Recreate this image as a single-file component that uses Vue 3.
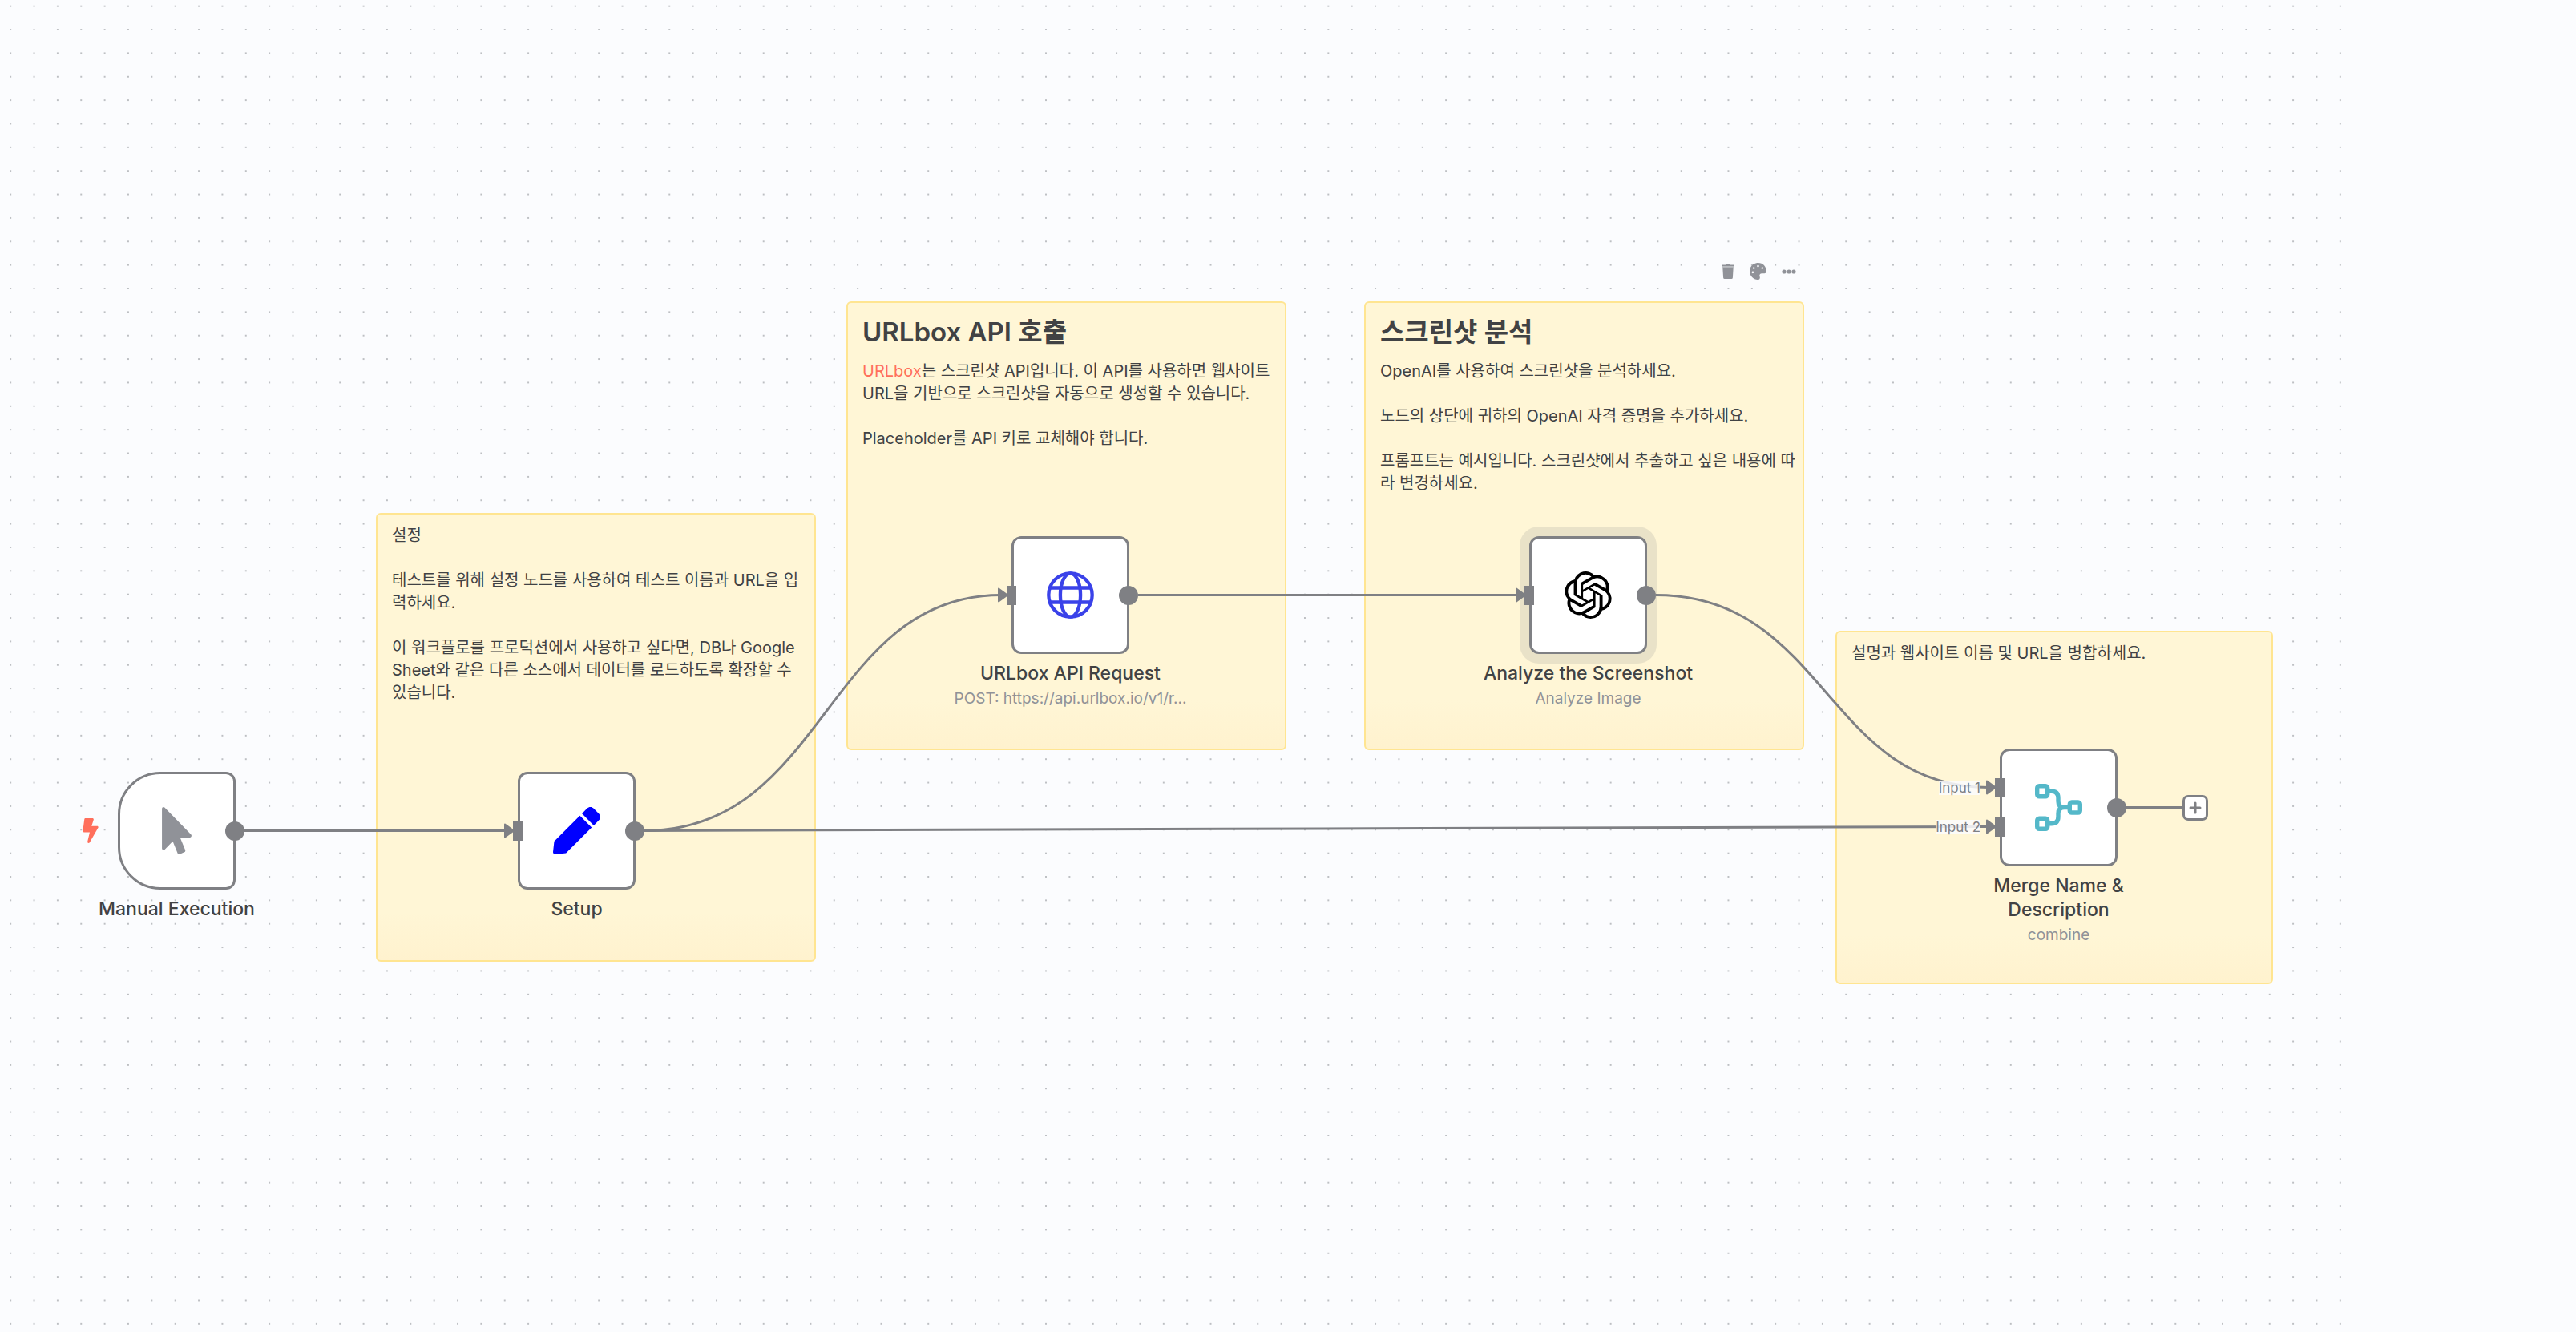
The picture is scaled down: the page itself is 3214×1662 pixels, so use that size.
<script setup>
// Each note holds paragraphs, and each paragraph its lines.
const stickies = [
  {
    id: 'setup', x: 469, y: 640, w: 549, h: 560,
    paragraphs: [
      ['설정'],
      ['테스트를 위해 설정 노드를 사용하여 테스트 이름과 URL을 입', '력하세요.'],
      ['이 워크플로를 프로덕션에서 사용하고 싶다면, DB나 Google', 'Sheet와 같은 다른 소스에서 데이터를 로드하도록 확장할 수', '있습니다.'],
    ],
  },
  {
    id: 'urlbox', x: 1056, y: 376, w: 549, h: 560,
    title: 'URLbox API 호출',
    link: 'URLbox',
    paragraphs: [
      ['는 스크린샷 API입니다. 이 API를 사용하면 웹사이트', 'URL을 기반으로 스크린샷을 자동으로 생성할 수 있습니다.'],
      ['Placeholder를 API 키로 교체해야 합니다.'],
    ],
  },
  {
    id: 'analyze', x: 1702, y: 376, w: 549, h: 560,
    title: '스크린샷 분석',
    toolbar: true,
    paragraphs: [
      ['OpenAI를 사용하여 스크린샷을 분석하세요.'],
      ['노드의 상단에 귀하의 OpenAI 자격 증명을 추가하세요.'],
      ['프롬프트는 예시입니다. 스크린샷에서 추출하고 싶은 내용에 따', '라 변경하세요.'],
    ],
  },
  {
    id: 'merge', x: 2290, y: 787, w: 546, h: 441,
    paragraphs: [['설명과 웹사이트 이름 및 URL을 병합하세요.']],
  },
]

const nodes = [
  { id: 'manual', x: 147, y: 963, label: 'Manual Execution', trigger: true, inputs: [] },
  { id: 'setup', x: 646, y: 963, label: 'Setup', inputs: [''] },
  { id: 'request', x: 1262, y: 669, label: 'URLbox API Request', sub: 'POST: https://api.urlbox.io/v1/r...', inputs: [''] },
  { id: 'openai', x: 1908, y: 669, label: 'Analyze the Screenshot', sub: 'Analyze Image', inputs: [''], selected: true },
  { id: 'merge', x: 2495, y: 934, label: 'Merge Name & Description', sub: 'combine', inputs: ['Input 1', 'Input 2'], open: true },
]

// Each edge runs from an output dot to the tip of the arrow at an input.
const edges = [
  [305, 1036.5, 641, 1036.5],
  [804, 1036.5, 1257, 742.5],
  [1420, 742.5, 1903, 742.5],
  [2066, 742.5, 2490, 982.5],
  [804, 1036.5, 2490, 1031.5],
]

function curve([x1, y1, x2, y2]) {
  const mid = (x1 + x2) / 2
  return `M${x1} ${y1}C${mid} ${y1} ${mid} ${y2} ${x2 - 8} ${y2}`
}
</script>

<template>
  <main class="canvas">
    <svg class="layer" aria-hidden="true">
      <defs>
        <pattern id="grid" width="20" height="20" patternUnits="userSpaceOnUse" patternTransform="translate(-1.5 -7) scale(1.468)">
          <circle cx="10" cy="10" r="0.6" fill="#a0a2a7" />
        </pattern>
      </defs>
      <rect width="2930" height="100%" fill="url(#grid)" />
    </svg>

    <section
      v-for="s in stickies"
      :key="s.id"
      class="sticky"
      :style="{ left: s.x + 'px', top: s.y + 'px', width: s.w + 'px', height: s.h + 'px' }"
    >
      <h2 v-if="s.title">{{ s.title }}</h2>
      <p v-for="(lines, i) in s.paragraphs" :key="i">
        <span v-for="(line, j) in lines" :key="j" class="line"><a v-if="s.link && !i && !j" href="#urlbox">{{ s.link }}</a>{{ line }}</span>
      </p>
      <div v-if="s.toolbar" class="toolbar">
        <button type="button" aria-label="Delete">
          <svg width="16" height="20" viewBox="0 0 16 20">
            <path d="M5.500 1.600Q5.700.8 6.500.8h3q.8 0 1 .8h4.700q.6 0 .6.6v.8H.2v-.8q0-.6.6-.6z" />
            <path d="M.6 3h14.800v1.600H.6z" opacity=".6" />
            <path d="M1.300 4.600h13.400l-.8 12.800q-.1 1.600-1.600 1.600H3.700q-1.500 0-1.600-1.600z" />
          </svg>
        </button>
        <button type="button" aria-label="Change color">
          <svg width="21" height="21" viewBox="0 0 512 512">
            <path d="M204.300 5C104.900 24.400 24.800 104.300 5.200 203.400c-37 187 131.700 326.400 258.800 306.700 41.200-6.400 61.400-54.600 42.500-91.700-23.100-45.400 9.900-98.400 60.900-98.400h79.700c35.800 0 64.800-29.600 64.900-65.300C511.500 97.100 368.100-26.900 204.300 5zM96 320c-17.700 0-32-14.300-32-32s14.300-32 32-32 32 14.300 32 32-14.300 32-32 32zm32-128c-17.700 0-32-14.300-32-32s14.300-32 32-32 32 14.300 32 32-14.300 32-32 32zm128-64c-17.700 0-32-14.300-32-32s14.300-32 32-32 32 14.300 32 32-14.300 32-32 32zm128 64c-17.700 0-32-14.300-32-32s14.300-32 32-32 32 14.300 32 32-14.300 32-32 32z" />
          </svg>
        </button>
        <button type="button" aria-label="More">
          <svg width="18" height="6" viewBox="0 0 18 6">
            <circle cx="3" cy="3" r="2.6" /><circle cx="9" cy="3" r="2.6" /><circle cx="15" cy="3" r="2.6" />
          </svg>
        </button>
      </div>
    </section>

    <svg class="layer" aria-hidden="true">
      <g v-for="(e, i) in edges" :key="i">
        <path class="edge" :d="curve(e)" />
        <path class="arrow" :d="`M${e[2] - 11} ${e[3] - 8}L${e[2]} ${e[3]}L${e[2] - 11} ${e[3] + 8}z`" />
      </g>
      <path class="edge" d="M2653 1007.5H2724" />
    </svg>

    <article
      v-for="n in nodes"
      :key="n.id"
      class="node"
      :style="{ left: n.x + 'px', top: n.y + 'px' }"
    >
      <svg v-if="n.trigger" class="bolt" width="20" height="31" viewBox="0 0 320 512">
        <path d="M296 160H180.600l42.600-129.800C227.200 15 215.700 0 200 0H56C44 0 33.800 8.900 32.200 20.800l-32 240C-1.700 275.200 9.500 288 24 288h118.700L96.600 482.500c-3.600 15.200 8 29.500 23.300 29.500 8.400 0 16.400-4.400 20.800-12l176-304c9.300-15.900-2.200-36-20.700-36z" />
      </svg>
      <div class="box" :class="{ trigger: n.trigger, selected: n.selected }">
        <svg v-if="n.id === 'manual'" width="37" height="59" viewBox="0 0 320 512" fill="#909298">
          <path d="M302.189 329.126H196.105l55.831 135.993c3.889 9.428-.555 19.999-9.444 23.999l-49.165 21.427c-9.165 4-19.443-.571-23.332-9.714l-53.053-129.136-86.664 89.138C18.729 472.710 0 463.554 0 447.977V18.299C0 1.899 19.921-6.096 30.277 5.443l284.412 292.542c11.472 11.179 3.007 31.141-12.500 31.141z" />
        </svg>
        <svg v-else-if="n.id === 'setup'" width="59" height="59" viewBox="0 0 512 512" fill="#0000ff">
          <path d="M290.740 93.240l128.020 128.020-277.990 277.990-114.140 12.600C11.350 513.540-1.560 500.620.140 485.340l12.700-114.220 277.900-277.880zm207.200-19.060l-60.110-60.110c-18.750-18.750-49.160-18.750-67.910 0l-56.550 56.550 128.020 128.020 56.550-56.550c18.750-18.760 18.750-49.160 0-67.910z" />
        </svg>
        <svg v-else-if="n.id === 'request'" width="59" height="59" viewBox="0 0 59 59" fill="none" stroke="#3a42e9" stroke-width="4.3">
          <circle cx="29.5" cy="29.5" r="27.2" />
          <ellipse cx="29.5" cy="29.5" rx="12.6" ry="27.2" />
          <path d="M4 20.500H55M4 38.500H55" />
        </svg>
        <svg v-else-if="n.id === 'openai'" width="59" height="59" viewBox="0 0 24 24" fill="#000">
          <path d="M22.2819 9.8211a5.9847 5.9847 0 0 0-.5157-4.9108 6.0462 6.0462 0 0 0-6.5098-2.9A6.0651 6.0651 0 0 0 4.9807 4.1818a5.9847 5.9847 0 0 0-3.9977 2.9 6.0462 6.0462 0 0 0 .7427 7.0966 5.98 5.98 0 0 0 .511 4.9107 6.051 6.051 0 0 0 6.5146 2.9001A5.9847 5.9847 0 0 0 13.2599 24a6.0557 6.0557 0 0 0 5.7718-4.2058 5.9894 5.9894 0 0 0 3.9977-2.9001 6.0557 6.0557 0 0 0-.7475-7.0729zm-9.022 12.6081a4.4755 4.4755 0 0 1-2.8764-1.0408l.1419-.0804 4.7783-2.7582a.7948.7948 0 0 0 .3927-.6813v-6.7369l2.02 1.1686a.071.071 0 0 1 .038.052v5.5826a4.504 4.504 0 0 1-4.4945 4.4944zm-9.6607-4.1254a4.4708 4.4708 0 0 1-.5346-3.0137l.142.0852 4.783 2.7582a.7712.7712 0 0 0 .7806 0l5.8428-3.3685v2.3324a.0804.0804 0 0 1-.0332.0615L9.74 19.9502a4.4992 4.4992 0 0 1-6.1408-1.6464zM2.3408 7.8956a4.485 4.485 0 0 1 2.3655-1.9728V11.6a.7664.7664 0 0 0 .3879.6765l5.8144 3.3543-2.0201 1.1685a.0757.0757 0 0 1-.071 0l-4.8303-2.7865A4.504 4.504 0 0 1 2.3408 7.872zm16.5963 3.8558L13.1038 8.364 15.1192 7.2a.0757.0757 0 0 1 .071 0l4.8303 2.7913a4.4944 4.4944 0 0 1-.6765 8.1042v-5.6772a.79.79 0 0 0-.407-.667zm2.0107-3.0231l-.142-.0852-4.7735-2.7818a.7759.7759 0 0 0-.7854 0L9.409 9.2297V6.8974a.0662.0662 0 0 1 .0284-.0615l4.8303-2.7866a4.4992 4.4992 0 0 1 6.6802 4.66zM8.3065 12.863l-2.02-1.1638a.0804.0804 0 0 1-.038-.0567V6.0742a4.4992 4.4992 0 0 1 7.3757-3.4537l-.142.0805L8.704 5.459a.7948.7948 0 0 0-.3927.6813zm1.0976-2.3654l2.602-1.4998 2.6069 1.4998v2.9994l-2.5974 1.4997-2.6067-1.4997Z" />
        </svg>
        <svg v-else width="59" height="59" viewBox="0 0 59 59" fill="none" stroke="#54b8c9" stroke-width="5.4">
          <rect x="2.7" y="2.7" width="13" height="13" rx="2.5" />
          <rect x="2.7" y="43.3" width="13" height="13" rx="2.5" />
          <rect x="43.3" y="23" width="13" height="13" rx="2.5" />
          <path d="M16 9.200h4.500q8.500 0 8.500 8.500v4q0 7.800 7.500 7.800h7M16 49.800h4.500q8.500 0 8.500-8.500v-4q0-7.800 7.500-7.800h7" />
        </svg>

        <div class="inputs">
          <span v-for="(name, i) in n.inputs" :key="i" class="input">
            <span v-if="name" class="input-name">{{ name }}</span>
          </span>
        </div>
        <span class="output"></span>
        <button v-if="n.open" type="button" class="plus" aria-label="Add node">
          <svg width="16" height="16" viewBox="0 0 16 16"><path d="M8 2V14M2 8H14" /></svg>
        </button>
      </div>
      <h3>{{ n.label }}</h3>
      <p v-if="n.sub">{{ n.sub }}</p>
    </article>
  </main>
</template>

<style>
body {
  margin: 0;
  background: #fbfcfe;
}
</style>

<style scoped>
.canvas {
  position: relative;
  min-height: 100vh;
  overflow: hidden;
  background: #fbfcfe;
  color: #414244;
  font-family: Inter, "Noto Sans CJK KR", sans-serif;
}

.layer {
  position: absolute;
  inset: 0;
  width: 100%;
  height: 100%;
  pointer-events: none;
}

.edge {
  fill: none;
  stroke: #7f8084;
  stroke-width: 3;
}

.arrow {
  fill: #7f8084;
  stroke: #7f8084;
  stroke-width: 2;
  stroke-linejoin: round;
}

.sticky {
  position: absolute;
  box-sizing: border-box;
  padding: 12px 18px;
  border: 2px solid #ffe591;
  border-radius: 6px;
  background: linear-gradient(#fff6d6 calc(100% - 60px), #fff2ce);
}

.sticky h2 {
  margin: 0 0 11px;
  font-size: 33px;
  line-height: 48px;
  font-weight: 600;
}

.sticky p {
  margin: 0;
  font-size: 20px;
  line-height: 28px;
}

.sticky p + p {
  margin-top: 28px;
}

.line {
  display: block;
  white-space: nowrap;
}

.sticky a {
  color: #ff6f5c;
  text-decoration: none;
}

.toolbar {
  position: absolute;
  right: 8px;
  bottom: 100%;
  display: flex;
  gap: 19px;
  align-items: center;
  margin-bottom: 29px;
}

button {
  display: flex;
  align-items: center;
  justify-content: center;
  padding: 0;
  border: 0;
  background: none;
  cursor: pointer;
}

.toolbar svg {
  display: block;
  fill: #909298;
}

.node {
  position: absolute;
  display: flex;
  flex-direction: column;
  align-items: center;
  width: 147px;
}

.box {
  position: relative;
  display: flex;
  align-items: center;
  justify-content: center;
  box-sizing: border-box;
  width: 147px;
  height: 147px;
  border: 3px solid #7f8084;
  border-radius: 12px;
  background: #fff;
}

.box.trigger {
  border-radius: 53px 12px 12px 53px;
}

.box.selected {
  box-shadow: 0 0 0 12px rgba(127, 128, 132, 0.17);
}

.bolt {
  position: absolute;
  left: -44px;
  top: 58px;
  fill: #ff6f5c;
}

.inputs {
  position: absolute;
  left: -9px;
  top: 0;
  bottom: 0;
  display: flex;
  flex-direction: column;
  justify-content: center;
  gap: 25px;
}

.input {
  position: relative;
  width: 12px;
  height: 24px;
  background: #7f8084;
}

.input-name {
  position: absolute;
  right: 100%;
  top: 3px;
  margin-right: 18px;
  background: rgba(251, 252, 254, 0.85);
  color: #7f8084;
  font-size: 17px;
  line-height: 18px;
  white-space: nowrap;
}

.output {
  position: absolute;
  right: -14px;
  top: calc(50% - 12px);
  width: 24px;
  height: 24px;
  border-radius: 50%;
  background: #7f8084;
}

.plus {
  position: absolute;
  left: 225px;
  top: calc(50% - 16px);
  box-sizing: border-box;
  width: 32px;
  height: 32px;
  border: 3px solid #7f8084;
  border-radius: 7px;
  background: #fff;
}

.plus svg {
  stroke: #7f8084;
  stroke-width: 3;
  stroke-linecap: round;
}

.node h3 {
  width: max-content;
  max-width: 270px;
  margin: 9px 0 0;
  font-size: 23px;
  line-height: 30px;
  font-weight: 500;
  text-align: center;
}

.node:last-child h3 {
  max-width: 200px;
}

.node p {
  margin: 5px 0 0;
  color: #909298;
  font-size: 19px;
  line-height: 24px;
  white-space: nowrap;
}
</style>
